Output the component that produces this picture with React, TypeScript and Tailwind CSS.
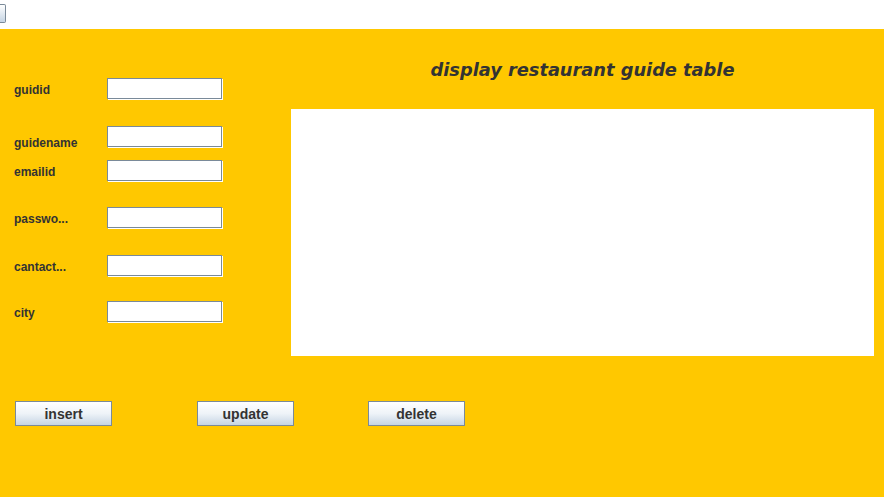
import React from "react";

const fields = [
  { label: "guidid", gap: "mt-[49px]", drop: "pt-[1px]" },
  { label: "guidename", gap: "mt-[26px]", drop: "pt-[11px]" },
  { label: "emailid", gap: "mt-[12px]", drop: "pt-[1px]" },
  { label: "passwo...", gap: "mt-[25px]", drop: "pt-[2px]" },
  { label: "cantact...", gap: "mt-[26px]", drop: "pt-[2px]" },
  { label: "city", gap: "mt-[24px]", drop: "pt-[1px]" },
];

function JButton({ text }: { text: string }) {
  return (
    <button className="w-[97px] h-[25px] border border-[#7a8a99] bg-gradient-to-b from-white via-[#eef3f8] to-[#c6d5e4] text-[14px] font-bold text-[#333333] leading-none">
      {text}
    </button>
  );
}

export default function App() {
  return (
    <div className="w-[884px] h-[497px] overflow-hidden bg-white font-['Liberation_Sans',Arial,sans-serif]">
      <div className="h-[29px] pt-[4px]">
        <div className="w-[6px] h-[19px] border border-l-0 border-[#7a8a99] rounded-r-[2px] bg-gradient-to-b from-white to-[#c6d5e4]" />
      </div>

      <div className="h-[468px] bg-[#ffc800]">
        <div className="flex">
          <div className="w-[291px] flex flex-col">
            {fields.map((f) => (
              <div key={f.label} className={`flex items-center h-[22px] ${f.gap}`}>
                <span
                  className={`w-[107px] pl-[14px] text-[12px] font-bold text-[#333333] ${f.drop}`}
                >
                  {f.label}
                </span>
                <input
                  type="text"
                  className="self-start w-[115px] h-[21px] bg-white border border-[#7a8a99] shadow-[1px_1px_0_#ffffff] outline-none"
                />
              </div>
            ))}
          </div>

          <div className="w-[583px] flex flex-col">
            <h1 className="mt-[29px] h-[24px] text-center text-[17.8px] leading-[24px] font-bold italic text-[#333333] font-['DejaVu_Sans',Verdana,sans-serif]">
              display restaurant guide table
            </h1>
            <div className="mt-[27px] h-[247px] bg-white" />
          </div>
        </div>

        <div className="flex mt-[45px] pl-[15px]">
          <JButton text="insert" />
          <div className="ml-[85px]">
            <JButton text="update" />
          </div>
          <div className="ml-[74px]">
            <JButton text="delete" />
          </div>
        </div>
      </div>
    </div>
  );
}
